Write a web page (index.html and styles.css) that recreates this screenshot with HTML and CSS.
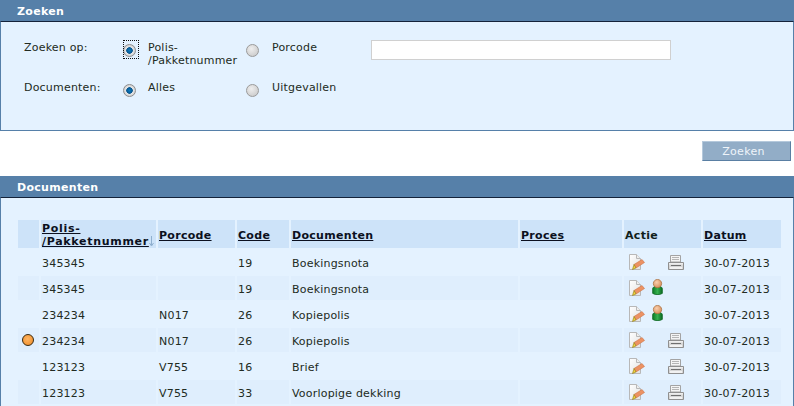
FILE: index.html
```html
<!DOCTYPE html>
<html lang="nl">
<head>
<meta charset="utf-8">
<title>Zoeken</title>
<link rel="stylesheet" href="styles.css">
</head>
<body>
<svg class="defs" width="0" height="0" aria-hidden="true">
  <defs>
    <linearGradient id="pg" x1="0" y1="0" x2="1" y2="1"><stop offset="0" stop-color="#fff"/><stop offset="1" stop-color="#e2e2e2"/></linearGradient>
    <linearGradient id="gr" x1="0" y1="0" x2="1" y2="0"><stop offset="0" stop-color="#0d7a26"/><stop offset="0.5" stop-color="#35b04f"/><stop offset="1" stop-color="#0c6a22"/></linearGradient>
    <radialGradient id="sk" cx="0.4" cy="0.35" r="0.7"><stop offset="0" stop-color="#f9cfae"/><stop offset="1" stop-color="#d68a55"/></radialGradient>
    <symbol id="i-note" viewBox="0 0 16 16">
      <path d="M.5 .5H7.500L11.500 4.500V15.500H.5Z" fill="url(#pg)" stroke="#b8b8b8"/>
      <path d="M7.500 .5V4.500H11.500" fill="#eee" stroke="#b8b8b8"/>
      <path d="M5 10.500 13 5.500 15.500 8.500 7 14Z" fill="#ec9263" stroke="#cf7548" stroke-width=".6"/>
      <path d="M3.500 15.500 5 10.500 7 14Z" fill="#f3d23c" stroke="#8c7a10" stroke-width=".6"/>
    </symbol>
    <symbol id="i-print" viewBox="0 0 16 15">
      <path d="M2.500 .5H12.500V7H2.500Z" fill="#f4f4f4" stroke="#a3a3a3"/>
      <path d="M4 2.500H11M4 4.500H11" stroke="#b5b5b5"/>
      <path d="M.5 7.500H15.500V14.500H.5Z" fill="#d6d6d6" stroke="#8f8f8f"/>
      <path d="M1 8H15V9.500H1Z" fill="#eeeeee"/>
      <path d="M3 10.500H13" stroke="#6f6f6f"/>
      <path d="M2 12H14V14H2Z" fill="#f2f2f2"/>
    </symbol>
    <symbol id="i-user" viewBox="0 0 10 15">
      <path d="M.5 13.500V9C.5 8 1.500 7.500 2.500 7H7.500C8.500 7.500 9.500 8 9.500 9V13.500L7 14.500H3Z" fill="url(#gr)" stroke="#0f6a25" stroke-width=".8"/>
      <circle cx="5" cy="4.300" r="3.900" fill="url(#sk)" stroke="#a9703f" stroke-width=".7"/>
    </symbol>
  </defs>
</svg>

<section class="block">
  <h2 class="bar">Zoeken</h2>
  <div class="panel panel-search">
    <form class="search-grid">
      <span class="lbl">Zoeken op:</span>
      <span class="radio-cell focus"><input class="radio" type="radio" name="a" checked></span>
      <span class="lbl">Polis-<br>/Pakketnummer</span>
      <span class="radio-cell"><input class="radio" type="radio" name="a"></span>
      <span class="lbl">Porcode</span>
      <input class="field" type="text">
      <span class="lbl">Documenten:</span>
      <span class="radio-cell"><input class="radio" type="radio" name="b" checked></span>
      <span class="lbl">Alles</span>
      <span class="radio-cell"><input class="radio" type="radio" name="b"></span>
      <span class="lbl">Uitgevallen</span>
    </form>
  </div>
</section>

<div class="actions"><button class="btn" type="button">Zoeken</button></div>

<section class="block">
  <h2 class="bar">Documenten</h2>
  <div class="panel panel-docs">
    <table class="docs">
      <colgroup>
        <col class="c1"><col class="c2"><col class="c3"><col class="c4"><col class="c5"><col class="c6"><col class="c7"><col class="c8">
      </colgroup>
      <thead>
        <tr>
          <th></th>
          <th><a href="#" class="wide">Polis-<br>/Pakketnummer</a><svg class="sort" width="5" height="12" viewBox="0 0 5 12"><path d="M2.500 1V10M.5 8 2.500 11 4.500 8" fill="none" stroke="#8fb0cf"/></svg></th>
          <th><a href="#">Porcode</a></th>
          <th><a href="#">Code</a></th>
          <th><a href="#">Documenten</a></th>
          <th><a href="#">Proces</a></th>
          <th>Actie</th>
          <th><a href="#">Datum</a></th>
        </tr>
      </thead>
      <tbody>
        <tr>
          <td></td><td>345345</td><td></td><td>19</td><td>Boekingsnota</td><td></td>
          <td><div class="act"><svg class="ic-note"><use href="#i-note"/></svg><span class="slot"></span><svg class="ic-print"><use href="#i-print"/></svg></div></td>
          <td>30-07-2013</td>
        </tr>
        <tr>
          <td></td><td>345345</td><td></td><td>19</td><td>Boekingsnota</td><td></td>
          <td><div class="act"><svg class="ic-note"><use href="#i-note"/></svg><span class="slot"><svg class="ic-user"><use href="#i-user"/></svg></span></div></td>
          <td>30-07-2013</td>
        </tr>
        <tr>
          <td></td><td>234234</td><td>N017</td><td>26</td><td>Kopiepolis</td><td></td>
          <td><div class="act"><svg class="ic-note"><use href="#i-note"/></svg><span class="slot"><svg class="ic-user"><use href="#i-user"/></svg></span></div></td>
          <td>30-07-2013</td>
        </tr>
        <tr>
          <td class="dot-cell"><span class="dot"></span></td><td>234234</td><td>N017</td><td>26</td><td>Kopiepolis</td><td></td>
          <td><div class="act"><svg class="ic-note"><use href="#i-note"/></svg><span class="slot"></span><svg class="ic-print"><use href="#i-print"/></svg></div></td>
          <td>30-07-2013</td>
        </tr>
        <tr>
          <td></td><td>123123</td><td>V755</td><td>16</td><td>Brief</td><td></td>
          <td><div class="act"><svg class="ic-note"><use href="#i-note"/></svg><span class="slot"></span><svg class="ic-print"><use href="#i-print"/></svg></div></td>
          <td>30-07-2013</td>
        </tr>
        <tr>
          <td></td><td>123123</td><td>V755</td><td>33</td><td>Voorlopige dekking</td><td></td>
          <td><div class="act"><svg class="ic-note"><use href="#i-note"/></svg><span class="slot"></span><svg class="ic-print"><use href="#i-print"/></svg></div></td>
          <td>30-07-2013</td>
        </tr>
      </tbody>
    </table>
  </div>
</section>
</body>
</html>
```
FILE: styles.css
```css
html, body {
  margin: 0;
  padding: 0;
  height: 406px;
  overflow: hidden;
  background: #fff;
}
body {
  font-family: "DejaVu Sans", Verdana, sans-serif;
  font-size: 11px;
  line-height: 13px;
  letter-spacing: .2px;
  color: #222b22;
}
.defs { position: absolute; }

.bar {
  margin: 0;
  height: 21px;
  padding: 5px 0 0 17px;
  box-sizing: border-box;
  background: #5680a9;
  color: #fff;
  font-size: 11px;
  font-weight: bold;
  line-height: 13px;
  letter-spacing: .3px;
}
.panel {
  background: #e4f2ff;
  border: 1px solid #5680a9;
  border-top: 1px solid #14233a;
}
.panel-search {
  height: 110px;
  box-sizing: border-box;
  padding: 18px 0 0 23px;
}
.search-grid {
  display: grid;
  grid-template-columns: 99px 25px 98px 26px 99px 300px;
  grid-template-rows: 40px 40px;
}
.lbl { padding-top: 1px; }
.radio-cell {
  display: block;
  position: relative;
  padding-top: 4px;
}
.radio {
  appearance: none;
  display: block;
  margin: 0;
  width: 13px;
  height: 13px;
  border-radius: 50%;
  border: 1px solid #9a9a9a;
  box-sizing: border-box;
  background: radial-gradient(circle at 40% 35%, #eeeeee, #c4c4c4);
}
.radio:checked {
  background: radial-gradient(circle, #0b7cc2 0, #07568f 38%, #e6e6e6 46%, #bdbdbd 100%);
  border-color: #8d8d8d;
}
.radio-cell.focus::after {
  content: "";
  position: absolute;
  left: 0;
  top: 0;
  width: 14px;
  height: 17px;
  border: 1px dotted #111;
}
.field {
  display: block;
  width: 300px;
  height: 20px;
  box-sizing: border-box;
  margin: 0;
  border: 1px solid #d0d0d0;
  background: #fff;
}

.actions {
  display: flex;
  justify-content: flex-end;
  height: 45px;
  box-sizing: border-box;
  padding: 10px 3px 0 0;
}
.btn {
  width: 89px;
  height: 20px;
  padding: 0 6px 0 0;
  background: #92adc7;
  border: 1px solid;
  border-color: #b5c9dc #5a7fa3 #5a7fa3 #b5c9dc;
  color: #eef4fa;
  font-family: inherit;
  font-size: 11px;
  letter-spacing: .3px;
}

.panel-docs {
  padding: 20px 0 0 15px;
  border-bottom: 0;
}
.docs {
  border-collapse: separate;
  border-spacing: 2px;
  table-layout: fixed;
  width: 767px;
}
.c1 { width: 21px; }
.c2 { width: 115px; }
.c3 { width: 77px; }
.c4 { width: 52px; }
.c5 { width: 227px; }
.c6 { width: 102px; }
.c7 { width: 77px; }
.c8 { width: 78px; }
.docs th {
  height: 28px;
  box-sizing: border-box;
  padding: 2px 1px 0;
  background: #cde3f9;
  text-align: left;
  font-weight: bold;
  letter-spacing: .3px;
  color: #10201a;
  white-space: nowrap;
  vertical-align: middle;
}
.docs th a { color: #0b1020; }
.docs th a.wide { letter-spacing: .7px; }
.docs td {
  height: 24px;
  box-sizing: border-box;
  padding: 2px 1px 0;
  vertical-align: middle;
  white-space: nowrap;
}
.docs tbody tr:nth-child(even) td { background: #dfeefd; }
.sort { vertical-align: -2px; }
.dot {
  display: block;
  width: 10px;
  height: 10px;
  margin: -2px 0 0 3px;
  border-radius: 50%;
  border: 1px solid #3a2a10;
  background: radial-gradient(circle at 45% 40%, #ffb562, #ee8a25);
}
.act {
  display: flex;
  align-items: center;
  height: 20px;
  margin-top: -2px;
  padding-left: 4px;
}
.ic-note { width: 16px; height: 16px; display: block; }
.slot {
  display: flex;
  align-items: center;
  width: 23px;
  height: 18px;
}
.ic-user { width: 11px; height: 16px; display: block; margin: -2px 0 0 7px; }
.ic-print { width: 16px; height: 15px; display: block; }
```
